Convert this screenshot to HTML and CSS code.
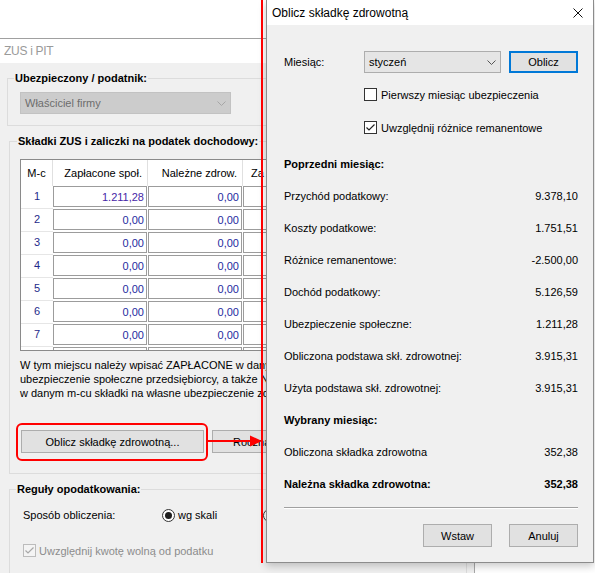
FILE: index.html
```html
<!DOCTYPE html>
<html lang="pl">
<head>
<meta charset="utf-8">
<title>Oblicz składkę zdrowotną</title>
<link rel="stylesheet" href="styles.css">
</head>
<body>
<div class="screen">
  <div class="win">
    <div class="win-title">ZUS i PIT</div>
    <div class="win-body">
      <fieldset class="grp grp1">
        <legend>Ubezpieczony / podatnik:</legend>
        <div class="combo combo-dis">
          <span>Właściciel firmy</span>
          <svg class="chev" width="9" height="5" viewBox="0 0 9 5"><path d="M0.5 0.5 L4.5 4.5 L8.5 0.5" fill="none" stroke="#a6a6a6" stroke-width="1"/></svg>
        </div>
      </fieldset>

      <fieldset class="grp grp2">
        <legend>Składki ZUS i zaliczki na podatek dochodowy:</legend>
        <div class="tbl">
          <div class="grid">
            <div class="hc mc">M-c</div>
            <div class="hc">Zapłacone społ.</div>
            <div class="hc">Należne zdrow.</div>
            <div class="hc hc-l">Za</div>

            <div class="rn">1</div><div class="dc"><div class="in v1">1.211,28</div></div><div class="dc"><div class="in">0,00</div></div><div class="dc"><div class="in"></div></div>
            <div class="rn">2</div><div class="dc"><div class="in">0,00</div></div><div class="dc"><div class="in">0,00</div></div><div class="dc"><div class="in"></div></div>
            <div class="rn">3</div><div class="dc"><div class="in">0,00</div></div><div class="dc"><div class="in">0,00</div></div><div class="dc"><div class="in"></div></div>
            <div class="rn">4</div><div class="dc"><div class="in">0,00</div></div><div class="dc"><div class="in">0,00</div></div><div class="dc"><div class="in"></div></div>
            <div class="rn">5</div><div class="dc"><div class="in">0,00</div></div><div class="dc"><div class="in">0,00</div></div><div class="dc"><div class="in"></div></div>
            <div class="rn">6</div><div class="dc"><div class="in">0,00</div></div><div class="dc"><div class="in">0,00</div></div><div class="dc"><div class="in"></div></div>
            <div class="rn">7</div><div class="dc"><div class="in">0,00</div></div><div class="dc"><div class="in">0,00</div></div><div class="dc"><div class="in"></div></div>
            <div class="rn"></div><div class="dc"><div class="in"></div></div><div class="dc"><div class="in"></div></div><div class="dc"><div class="in"></div></div>
          </div>
        </div>
        <p class="note">W tym miejscu należy wpisać ZAPŁACONE w dany<br>ubezpieczenie społeczne przedsiębiorcy, a także N<br>w danym m-cu składki na własne ubezpieczenie zd</p>
        <div class="btns">
          <button class="btn btn-zdrow">Oblicz składkę zdrowotną...</button>
          <button class="btn btn-roczna">Roczna</button>
        </div>
      </fieldset>

      <fieldset class="grp grp3">
        <legend>Reguły opodatkowania:</legend>
        <div class="sposob">
          <span class="sp-lbl">Sposób obliczenia:</span>
          <span class="radio r1">
            <svg width="13" height="13" viewBox="0 0 13 13"><circle cx="6.5" cy="6.5" r="6" fill="#fff" stroke="#333" stroke-width="1"/><circle cx="6.5" cy="6.5" r="3.5" fill="#1f1f1f"/></svg>
            <span>wg skali</span>
          </span>
          <span class="radio">
            <svg width="13" height="13" viewBox="0 0 13 13"><circle cx="6.5" cy="6.5" r="6" fill="#fff" stroke="#333" stroke-width="1"/></svg>
          </span>
        </div>
        <div class="chk-dis">
          <span class="box box-dis"><svg width="11" height="11" viewBox="0 0 11 11"><path d="M1.5 5.5 L4 8 L9.5 2.5" fill="none" stroke="#a8a8a8" stroke-width="1.2"/></svg></span>
          <span>Uwzględnij kwotę wolną od podatku</span>
        </div>
      </fieldset>
    </div>
  </div>

  <div class="dialog">
    <div class="dlg-title">
      <span>Oblicz składkę zdrowotną</span>
      <svg width="10" height="10" viewBox="0 0 10 10"><path d="M0.5 0.5 L9.5 9.5 M9.5 0.5 L0.5 9.5" stroke="#111" stroke-width="1" fill="none"/></svg>
    </div>
    <div class="dlg-body">
      <div class="month-row">
        <span class="m-lbl">Miesiąc:</span>
        <div class="combo combo-month">
          <span>styczeń</span>
          <svg class="chev" width="9" height="5" viewBox="0 0 9 5"><path d="M0.5 0.5 L4.5 4.5 L8.5 0.5" fill="none" stroke="#555" stroke-width="1"/></svg>
        </div>
        <button class="btn btn-oblicz">Oblicz</button>
      </div>
      <div class="chk chk1">
        <span class="box"></span>
        <span>Pierwszy miesiąc ubezpieczenia</span>
      </div>
      <div class="chk chk2">
        <span class="box"><svg width="11" height="11" viewBox="0 0 11 11"><path d="M1.5 5.5 L4 8 L9.5 2.5" fill="none" stroke="#222" stroke-width="1.2"/></svg></span>
        <span>Uwzględnij różnice remanentowe</span>
      </div>
      <div class="list">
        <div class="li b"><span>Poprzedni miesiąc:</span></div>
        <div class="li"><span>Przychód podatkowy:</span><span>9.378,10</span></div>
        <div class="li"><span>Koszty podatkowe:</span><span>1.751,51</span></div>
        <div class="li"><span>Różnice remanentowe:</span><span>-2.500,00</span></div>
        <div class="li"><span>Dochód podatkowy:</span><span>5.126,59</span></div>
        <div class="li"><span>Ubezpieczenie społeczne:</span><span>1.211,28</span></div>
        <div class="li"><span>Obliczona podstawa skł. zdrowotnej:</span><span>3.915,31</span></div>
        <div class="li"><span>Użyta podstawa skł. zdrowotnej:</span><span>3.915,31</span></div>
        <div class="li b"><span>Wybrany miesiąc:</span></div>
        <div class="li"><span>Obliczona składka zdrowotna</span><span>352,38</span></div>
        <div class="li b"><span>Należna składka zdrowotna:</span><span>352,38</span></div>
      </div>
      <div class="sep"></div>
      <div class="dlg-btns">
        <button class="btn">Wstaw</button>
        <button class="btn">Anuluj</button>
      </div>
    </div>
  </div>

  <svg class="annot" width="595" height="573" viewBox="0 0 595 573">
    <rect x="261" y="0" width="2" height="563" fill="#ff0000"/>
    <rect x="17" y="424" width="190" height="36" rx="5" ry="5" fill="none" stroke="#ff0000" stroke-width="2"/>
    <rect x="208" y="440" width="44" height="2" fill="#ff0000"/>
    <polygon points="250,435.5 262,441 250,446.5" fill="#ff0000"/>
  </svg>
</div>
</body>
</html>
```

FILE: styles.css
```css
* { box-sizing: border-box; }
html, body { margin: 0; padding: 0; background: #fff; }
body { font-family: "Liberation Sans", Arial, sans-serif; font-size: 11px; color: #000; }

.screen { position: relative; width: 595px; height: 573px; overflow: hidden; background: #fff; }

/* back window */
.win { margin-top: 38px; width: 475px; height: 540px; border-top: 1px solid #a0a0a0; border-right: 1px solid #a8a8a8; background: #f0f0f0; }
.win-title { height: 24px; line-height: 24px; padding-left: 4px; background: #fff; color: #9a9a9a; font-size: 12px; letter-spacing: -0.3px; }
.win-body { padding-top: 8px; }

.grp { margin: 0; padding: 0; border: 1px solid #dcdcdc; min-width: 0; }
.grp legend { padding: 0 1px; font-weight: bold; line-height: 14px; }
.grp1 { margin-left: 7px; width: 460px; padding-bottom: 11px; }
.grp1 legend { margin-left: 6px; }
.grp2 { margin: 8px 0 0 9px; width: 458px; padding-bottom: 20px; }
.grp2 legend { margin-left: 7px; }
.grp3 { margin: 8px 0 0 9px; width: 458px; height: 130px; }
.grp3 legend { margin-left: 6px; }

.combo { display: flex; align-items: center; justify-content: space-between; height: 22px; padding: 0 4px; border: 1px solid #adadad; background: #e5e5e5; }
.combo-dis { width: 211px; margin: 7px 0 0 12px; background: #cccccc; border-color: #c2c2c2; color: #6d6d6d; padding-right: 4px; }
.chev { flex: none; }

.tbl { margin: 11px 0 0 10px; width: 440px; height: 192px; border: 1px solid #8a8a8a; background: #fff; overflow: hidden; }
.grid { display: grid; grid-template-columns: 32px 95px 95px 95px; grid-template-rows: 26px; grid-auto-rows: 23px; }
.hc { display: flex; align-items: center; justify-content: flex-end; padding-right: 5px; border-right: 1px solid #e0e0e0; white-space: nowrap; }
.hc.mc { justify-content: center; padding: 0; }
.hc.hc-l { justify-content: flex-start; padding: 0 0 0 8px; }
.rn { display: flex; align-items: center; justify-content: center; color: #1e2a8a; border-bottom: 1px solid #e6e6e6; padding-bottom: 2px; }
.dc { padding: 0 1px 2px 0; }
.in { height: 21px; border: 1px solid #9c9c9c; background: #fff; display: flex; align-items: center; justify-content: flex-end; padding-right: 2px; color: #1e2aa0; }
.in.v1 { color: #4626a6; }

.note { margin: 7px 0 0 10px; line-height: 14px; white-space: nowrap; }

.btn { font: inherit; color: #000; height: 23px; border: 1px solid #adadad; background: #e1e1e1; padding: 0; margin: 0; }
.btns { display: flex; gap: 8px; margin: 30px 0 0 11px; }
.btn-zdrow { width: 183px; }
.btn-roczna { width: 150px; text-align: left; padding-left: 20px; }

.sposob { display: flex; align-items: center; height: 16px; margin: 11px 0 0 13px; }
.sp-lbl { width: 139px; }
.radio { display: flex; align-items: center; gap: 3px; }
.radio svg { flex: none; }
.r1 { width: 101px; }

.chk-dis { display: flex; align-items: center; gap: 3px; height: 13px; margin: 21px 0 0 13px; color: #8c8c8c; }
.box { width: 13px; height: 13px; border: 1px solid #333; background: #fff; flex: none; display: flex; }
.box-dis { border-color: #bcbcbc; background: #f4f4f4; }

/* dialog */
.dialog { position: absolute; left: 266px; top: 0; width: 328px; height: 563px; border: 1px solid #8c8c8c; border-top: 0; background: #f0f0f0; box-shadow: 0 3px 8px rgba(0,0,0,0.22); }
.dlg-title { height: 25px; background: #fff; display: flex; align-items: center; justify-content: space-between; padding: 0 10px 0 5px; font-size: 12px; }
.dlg-body { padding: 26px 15px 0 17px; }
.month-row { display: flex; align-items: center; height: 22px; }
.m-lbl { width: 80px; }
.combo-month { width: 137px; }
.btn-oblicz { width: 69px; height: 22px; margin-left: 8px; border: 2px solid #0078d7; }
.chk { display: flex; align-items: center; gap: 4px; height: 13px; padding-left: 80px; }
.chk1 { margin-top: 15px; }
.chk2 { margin-top: 20px; }
.list { margin-top: 14px; }
.li { height: 32px; display: flex; align-items: center; justify-content: space-between; }
.li.b { font-weight: bold; }
.sep { margin-top: 7px; border-top: 1px solid #a0a0a0; border-bottom: 1px solid #fff; }
.dlg-btns { display: flex; justify-content: flex-end; gap: 17px; margin-top: 15px; }
.dlg-btns .btn { width: 69px; }

.annot { position: absolute; left: 0; top: 0; pointer-events: none; }
```
